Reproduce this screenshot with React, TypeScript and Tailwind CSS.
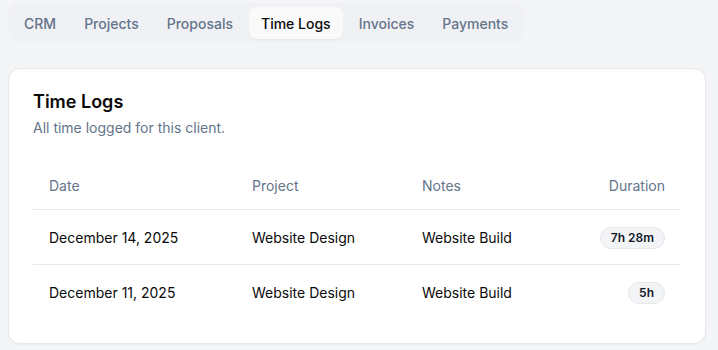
const tabs = ["CRM", "Projects", "Proposals", "Time Logs", "Invoices", "Payments"];

const logs = [
  { date: "December 14, 2025", project: "Website Design", notes: "Website Build", duration: "7h 28m" },
  { date: "December 11, 2025", project: "Website Design", notes: "Website Build", duration: "5h" },
];

function Tabs() {
  return (
    <div className="flex w-fit items-center gap-1 rounded-xl bg-[#f0f1f4] p-1">
      {tabs.map((t) => (
        <div
          key={t}
          className={
            t === "Time Logs"
              ? "flex h-8 items-center rounded-lg bg-[#fafafa] px-3 text-[14px] font-medium text-[#0a0a0a] shadow-[0_1px_2px_rgba(0,0,0,0.04)]"
              : "flex h-8 items-center rounded-lg px-3 text-[14px] font-medium text-[#64748b]"
          }
        >
          {t}
        </div>
      ))}
    </div>
  );
}

function Badge({ children }: { children: string }) {
  return (
    <span className="inline-flex h-[22px] items-center rounded-full border border-[#e5e7eb] bg-[#f3f4f6] px-[10px] text-[12px] font-semibold text-[#111827]">
      {children}
    </span>
  );
}

export default function App() {
  return (
    <div className="min-h-[350px] bg-[#f4f5f7] pl-2 pr-3 pt-[3px] font-['Inter',sans-serif]">
      <Tabs />
      <div className="mt-[25px] rounded-xl border border-[#e6e7ea] bg-white px-6 pb-[23px] pt-[19px] shadow-[0_1px_2px_rgba(0,0,0,0.04)]">
        <h2 className="text-[18px] font-semibold leading-7 text-[#0a0a0a]">Time Logs</h2>
        <p className="mt-[2px] text-[14px] leading-5 text-[#64748b]">All time logged for this client.</p>
        <div className="mt-6 text-[14px]">
          <div className="grid h-12 grid-cols-[203px_170px_1fr_auto] items-center border-b border-[#e5e7eb] text-[#64748b]">
            <div className="px-4">Date</div>
            <div className="px-4">Project</div>
            <div className="px-4">Notes</div>
            <div className="px-4 text-right">Duration</div>
          </div>
          {logs.map((l, i) => (
            <div
              key={i}
              className={
                i < logs.length - 1
                  ? "grid h-[55px] grid-cols-[203px_170px_1fr_auto] items-center border-b border-[#e5e7eb] text-[#0a0a0a]"
                  : "grid h-[55px] grid-cols-[203px_170px_1fr_auto] items-center text-[#0a0a0a]"
              }
            >
              <div className="px-4">{l.date}</div>
              <div className="px-4">{l.project}</div>
              <div className="px-4">{l.notes}</div>
              <div className="px-4 text-right">
                <Badge>{l.duration}</Badge>
              </div>
            </div>
          ))}
        </div>
      </div>
    </div>
  );
}
